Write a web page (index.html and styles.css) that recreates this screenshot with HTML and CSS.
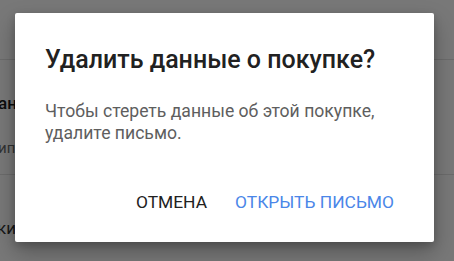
FILE: index.html
```html
<!DOCTYPE html>
<html lang="ru">
<head>
<meta charset="utf-8">
<link rel="stylesheet" href="styles.css">
</head>
<body>
<div class="page">
  <div class="row row-top"></div>
  <div class="row row-item">
    <div class="item-title">ан</div>
    <div class="item-sub">ипл</div>
  </div>
  <div class="row row-last">
    <div class="item-title2">ки</div>
  </div>
</div>
<div class="scrim"></div>
<div class="dialog">
  <h1 class="dialog-title">Удалить данные о покупке?</h1>
  <p class="dialog-text">Чтобы стереть данные об этой покупке, удалите письмо.</p>
  <div class="dialog-actions">
    <button class="btn btn-neutral">ОТМЕНА</button>
    <button class="btn btn-primary">ОТКРЫТЬ ПИСЬМО</button>
  </div>
</div>
</body>
</html>
```

FILE: styles.css
```css
html, body {
  margin: 0;
  padding: 0;
  width: 454px;
  height: 261px;
  overflow: hidden;
  background: #ffffff;
  font-family: Roboto, "Noto Sans", sans-serif;
}

.page {
  display: flex;
  flex-direction: column;
}

.row-top {
  height: 59px;
  border-bottom: 1px solid #e4e4e4;
}

.row-item {
  height: 114px;
  border-bottom: 1px solid #e4e4e4;
  display: flex;
  flex-direction: column;
  margin-left: -2px;
}

.item-title {
  margin-top: 33px;
  font-size: 17px;
  font-weight: 500;
  color: #1a1a1a;
  white-space: nowrap;
}

.item-sub {
  margin-top: 26px;
  font-size: 15px;
  color: #6a6a6a;
  white-space: nowrap;
}

.row-last {
  display: flex;
  flex-direction: column;
  margin-left: -3px;
}

.item-title2 {
  margin-top: 43px;
  font-size: 17px;
  color: #333333;
  white-space: nowrap;
}

.scrim {
  position: absolute;
  inset: 0;
  background: rgba(0, 0, 0, 0.53);
}

.dialog {
  position: absolute;
  left: 15px;
  top: 13px;
  width: 419px;
  height: 229px;
  box-sizing: border-box;
  background: #ffffff;
  border-radius: 2px;
  box-shadow: 0 10px 22px rgba(0, 0, 0, 0.28), 0 3px 8px rgba(0, 0, 0, 0.18);
  padding: 32px 30px 0 30px;
  display: flex;
  flex-direction: column;
}

.dialog-title {
  margin: 0;
  font-size: 25px;
  line-height: 30px;
  font-weight: 500;
  color: #212121;
}

.dialog-text {
  margin: 25px 0 0 0;
  font-size: 17.6px;
  line-height: 22px;
  color: #5e5e5e;
}

.dialog-actions {
  margin-top: 48px;
  display: flex;
  justify-content: flex-end;
  gap: 8px;
}

.btn {
  border: 0;
  background: transparent;
  padding: 0 10px;
  font-family: Roboto, "Noto Sans", sans-serif;
  font-size: 17.4px;
  line-height: 20px;
  font-weight: 400;
}

.btn-neutral {
  color: #212121;
}

.btn-primary {
  color: #4a86e8;
}
```
